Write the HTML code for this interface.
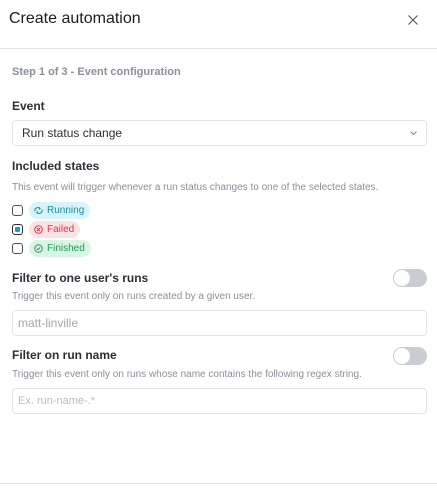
<!DOCTYPE html>
<html><head><style>
*{box-sizing:border-box;margin:0;padding:0}
body{width:437px;height:491px;background:#fff;font-family:"Liberation Sans",sans-serif;position:relative;overflow:hidden;color:#1a1d24}
.a{position:absolute;white-space:nowrap}
.lbl{font-size:12px;font-weight:bold;color:#2b2f36}
.desc{font-size:10px;color:#8a8f99}
.box{position:absolute;left:12px;width:415px;border:1px solid #e3e5e8;border-radius:4px;height:26px}
.cb{position:absolute;left:12px;width:11px;height:11px;border:1.3px solid #4a4f58;border-radius:3px}
.pill{position:absolute;left:29px;height:17px;border-radius:9px;font-size:10px;line-height:17px;padding:0 6px 0 18px}
.pill svg{position:absolute;left:5px;top:4px}
.tog{position:absolute;left:393px;width:34px;height:18px;border-radius:9px;background:#c9ccd1}
.tog::after{content:"";position:absolute;left:1px;top:1px;width:16px;height:16px;border-radius:50%;background:#fff}
</style></head><body>
<div class="a" style="left:9px;top:10px;font-size:16px;color:#1a1d24">Create automation</div>
<svg class="a" style="left:408px;top:15px" width="10" height="10" viewBox="0 0 10 10"><path d="M0.5 0.5L9.5 9.5M9.5 0.5L0.5 9.5" stroke="#555" stroke-width="1.1"/></svg>
<div class="a" style="left:0;top:48px;width:437px;height:1px;background:#e3e5e8"></div>
<div class="a" style="left:12px;top:66px;font-size:11px;font-weight:bold;color:#8a8f99">Step 1 of 3 - Event configuration</div>
<div class="a lbl" style="left:12px;top:99px">Event</div>
<div class="box" style="top:120px"></div>
<div class="a" style="left:22px;top:126px;font-size:12px;color:#2b2f36">Run status change</div>
<svg class="a" style="left:410px;top:131px" width="7" height="4" viewBox="0 0 7 4"><path d="M0.5 0.5L3.5 3.5L6.5 0.5" stroke="#888" fill="none"/></svg>
<div class="a lbl" style="left:12px;top:159px">Included states</div>
<div class="a desc" style="left:12px;top:182px">This event will trigger whenever a run status changes to one of the selected states.</div>
<div class="cb" style="top:205px"></div>
<div class="pill" style="top:202px;background:#d6f4fa;color:#1a8ca3"><svg width="9" height="9" viewBox="0 0 9 9"><path d="M1 5.5a3 3 0 0 1 5-3M8 3.5a3 3 0 0 1-5 3M5 1.5l1.2 1L5 3.5M4 5.5L2.8 6.5 4 7.5" stroke="#1a8ca3" fill="none" stroke-width="1"/></svg>Running</div>
<div class="cb" style="top:224px;border-color:#2b2f36"><div style="position:absolute;left:1.5px;top:1.5px;width:5.5px;height:5.5px;background:#13a5c0;border-radius:1px"></div></div>
<div class="pill" style="top:221px;background:#fde2e4;color:#e0334d"><svg width="9" height="9" viewBox="0 0 9 9"><circle cx="4.5" cy="4.5" r="3.8" stroke="#e0334d" fill="none"/><path d="M3 3l3 3M6 3L3 6" stroke="#e0334d"/></svg>Failed</div>
<div class="cb" style="top:243px"></div>
<div class="pill" style="top:240px;background:#d8f5e3;color:#1f9b5a"><svg width="9" height="9" viewBox="0 0 9 9"><circle cx="4.5" cy="4.5" r="3.8" stroke="#1f9b5a" fill="none"/><path d="M2.8 4.6l1.2 1.2 2.2-2.4" stroke="#1f9b5a" fill="none"/></svg>Finished</div>
<div class="a lbl" style="left:12px;top:271px">Filter to one user's runs</div>
<div class="tog" style="top:269px"></div>
<div class="a desc" style="left:12px;top:291px">Trigger this event only on runs created by a given user.</div>
<div class="box" style="top:310px"></div>
<div class="a" style="left:18px;top:316px;font-size:12px;color:#a3a7ae">matt-linville</div>
<div class="a lbl" style="left:12px;top:348px">Filter on run name</div>
<div class="tog" style="top:347px"></div>
<div class="a desc" style="left:12px;top:369px">Trigger this event only on runs whose name contains the following regex string.</div>
<div class="box" style="top:388px"></div>
<div class="a" style="left:18px;top:395px;font-size:11px;color:#b8bcc2">Ex. run-name-.*</div>
<div class="a" style="left:0;top:483px;width:437px;height:1px;background:#e3e5e8"></div>
</body></html>
